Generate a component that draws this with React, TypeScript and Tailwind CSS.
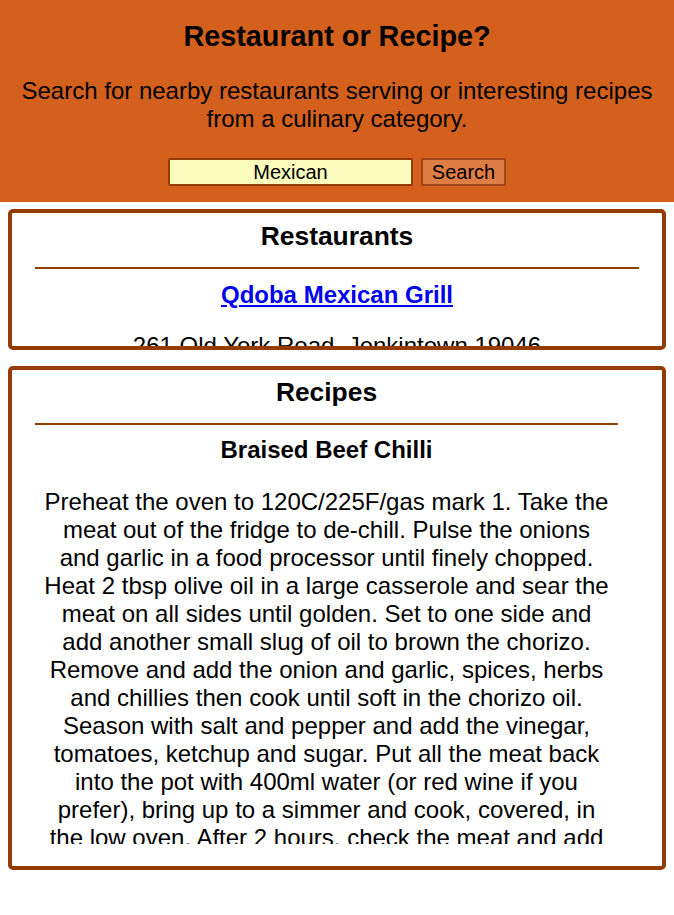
import React, { useState } from 'react';

const recipeText =
  'Preheat the oven to 120C/225F/gas mark 1. Take the meat out of the fridge to de-chill. Pulse the onions and garlic in a food processor until finely chopped. Heat 2 tbsp olive oil in a large casserole and sear the meat on all sides until golden. Set to one side and add another small slug of oil to brown the chorizo. Remove and add the onion and garlic, spices, herbs and chillies then cook until soft in the chorizo oil. Season with salt and pepper and add the vinegar, tomatoes, ketchup and sugar. Put all the meat back into the pot with 400ml water (or red wine if you prefer), bring up to a simmer and cook, covered, in the low oven. After 2 hours, check the meat and add the beans. Return to the oven for a further hour until the meat is tender and falling apart.';

export default function App() {
  const [query, setQuery] = useState('Mexican');

  return (
    <div className="min-h-[915px] bg-white text-black text-[24px] font-['Liberation_Sans',Arial,sans-serif]">
      <header className="bg-[#d3601c] pt-[20px] pb-[16px] px-4 text-center">
        <h1 className="text-[28.8px] font-bold leading-[33px]">Restaurant or Recipe?</h1>
        <p className="mt-[24px] leading-[28px]">
          Search for nearby restaurants serving or interesting recipes
          <br />
          from a culinary category.
        </p>
        <form
          className="mt-[25px] flex justify-center gap-[8px]"
          onSubmit={(e) => e.preventDefault()}
        >
          <input
            value={query}
            onChange={(e) => setQuery(e.target.value)}
            className="w-[245px] h-[28px] bg-[#fbfcbd] border-2 border-[#943c04] rounded-[2px] text-center text-[20px] leading-[24px] outline-none"
          />
          <button
            type="submit"
            className="w-[85px] h-[28px] bg-[#e07d45] border-2 border-[#a2461a] rounded-[2px] text-[20px] leading-[24px]"
          >
            Search
          </button>
        </form>
      </header>

      <section className="mx-[8px] mt-[7px] h-[141px] overflow-hidden border-4 border-[#943c04] rounded-[5px] text-center">
        <div className="px-[23px] pt-[8px]">
          <h2 className="text-[26.4px] font-bold leading-[30px]">Restaurants</h2>
          <hr className="mt-[16px] border-0 h-[2px] bg-[#943c04]" />
          <a href="#" className="mt-[12px] block font-bold text-[#0000ee] underline leading-[28px]">
            Qdoba Mexican Grill
          </a>
          <p className="mt-[23px] leading-[28px]">261 Old York Road, Jenkintown 19046</p>
        </div>
      </section>

      <section className="mx-[8px] mt-[16px] h-[504px] pb-[22px] border-4 border-[#943c04] rounded-[5px] text-center">
        <div className="h-full overflow-hidden pl-[23px] pr-[44px] pt-[7px]">
          <h2 className="text-[26.4px] font-bold leading-[30px]">Recipes</h2>
          <hr className="mt-[16px] border-0 h-[2px] bg-[#943c04]" />
          <h3 className="mt-[11px] font-bold leading-[28px]">Braised Beef Chilli</h3>
          <p className="mt-[24px] mx-[6px] leading-[28px]">{recipeText}</p>
        </div>
      </section>
    </div>
  );
}
